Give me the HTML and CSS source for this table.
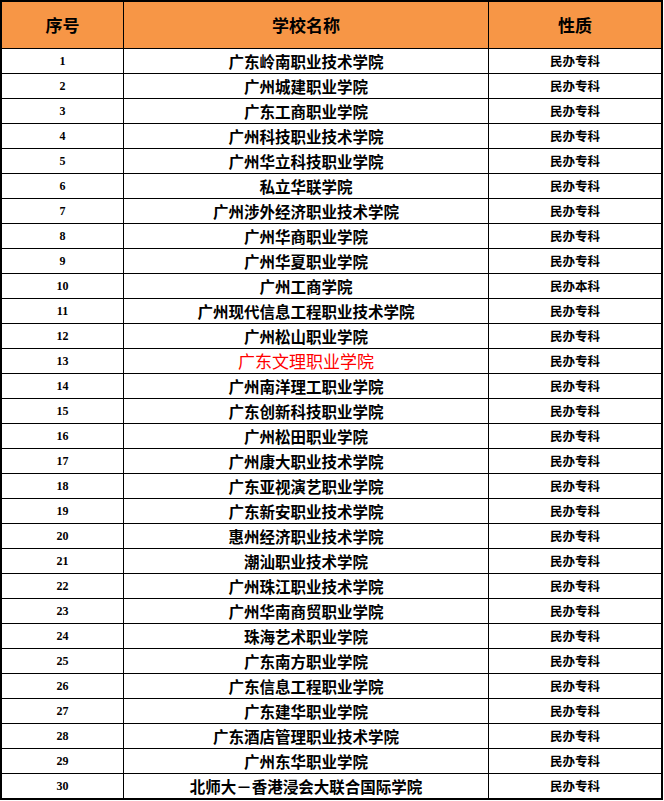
FILE: index.html
```html
<!DOCTYPE html>
<html lang="zh">
<head>
<meta charset="utf-8">
<link rel="stylesheet" href="styles.css">
</head>
<body>
<table class="tbl">
  <colgroup><col class="c1"><col class="c2"><col class="c3"></colgroup>
  <thead>
    <tr><th>序号</th><th>学校名称</th><th>性质</th></tr>
  </thead>
  <tbody>
    <tr><td class="num">1</td><td class="name">广东岭南职业技术学院</td><td class="kind">民办专科</td></tr>
    <tr><td class="num">2</td><td class="name">广州城建职业学院</td><td class="kind">民办专科</td></tr>
    <tr><td class="num">3</td><td class="name">广东工商职业学院</td><td class="kind">民办专科</td></tr>
    <tr><td class="num">4</td><td class="name">广州科技职业技术学院</td><td class="kind">民办专科</td></tr>
    <tr><td class="num">5</td><td class="name">广州华立科技职业学院</td><td class="kind">民办专科</td></tr>
    <tr><td class="num">6</td><td class="name">私立华联学院</td><td class="kind">民办专科</td></tr>
    <tr><td class="num">7</td><td class="name">广州涉外经济职业技术学院</td><td class="kind">民办专科</td></tr>
    <tr><td class="num">8</td><td class="name">广州华商职业学院</td><td class="kind">民办专科</td></tr>
    <tr><td class="num">9</td><td class="name">广州华夏职业学院</td><td class="kind">民办专科</td></tr>
    <tr><td class="num">10</td><td class="name">广州工商学院</td><td class="kind">民办本科</td></tr>
    <tr><td class="num">11</td><td class="name">广州现代信息工程职业技术学院</td><td class="kind">民办专科</td></tr>
    <tr><td class="num">12</td><td class="name">广州松山职业学院</td><td class="kind">民办专科</td></tr>
    <tr><td class="num">13</td><td class="name hl">广东文理职业学院</td><td class="kind">民办专科</td></tr>
    <tr><td class="num">14</td><td class="name">广州南洋理工职业学院</td><td class="kind">民办专科</td></tr>
    <tr><td class="num">15</td><td class="name">广东创新科技职业学院</td><td class="kind">民办专科</td></tr>
    <tr><td class="num">16</td><td class="name">广州松田职业学院</td><td class="kind">民办专科</td></tr>
    <tr><td class="num">17</td><td class="name">广州康大职业技术学院</td><td class="kind">民办专科</td></tr>
    <tr><td class="num">18</td><td class="name">广东亚视演艺职业学院</td><td class="kind">民办专科</td></tr>
    <tr><td class="num">19</td><td class="name">广东新安职业技术学院</td><td class="kind">民办专科</td></tr>
    <tr><td class="num">20</td><td class="name">惠州经济职业技术学院</td><td class="kind">民办专科</td></tr>
    <tr><td class="num">21</td><td class="name">潮汕职业技术学院</td><td class="kind">民办专科</td></tr>
    <tr><td class="num">22</td><td class="name">广州珠江职业技术学院</td><td class="kind">民办专科</td></tr>
    <tr><td class="num">23</td><td class="name">广州华南商贸职业学院</td><td class="kind">民办专科</td></tr>
    <tr><td class="num">24</td><td class="name">珠海艺术职业学院</td><td class="kind">民办专科</td></tr>
    <tr><td class="num">25</td><td class="name">广东南方职业学院</td><td class="kind">民办专科</td></tr>
    <tr><td class="num">26</td><td class="name">广东信息工程职业学院</td><td class="kind">民办专科</td></tr>
    <tr><td class="num">27</td><td class="name">广东建华职业学院</td><td class="kind">民办专科</td></tr>
    <tr><td class="num">28</td><td class="name">广东酒店管理职业技术学院</td><td class="kind">民办专科</td></tr>
    <tr><td class="num">29</td><td class="name">广州东华职业学院</td><td class="kind">民办专科</td></tr>
    <tr><td class="num">30</td><td class="name">北师大－香港浸会大联合国际学院</td><td class="kind">民办专科</td></tr>
  </tbody>
</table>
</body>
</html>
```
FILE: styles.css
```css
html, body {
  margin: 0;
  padding: 0;
  background: #ffffff;
}

.tbl {
  border-collapse: separate;
  border-spacing: 0;
  border: 2px solid #000;
  width: 663px;
  table-layout: fixed;
  font-family: "Noto Sans CJK SC", "Noto Sans", sans-serif;
  color: #000;
}

.c1 { width: 122px; }
.c2 { width: 365px; }
.c3 { width: 172px; }

.tbl th,
.tbl td {
  padding: 0;
  text-align: center;
  vertical-align: middle;
  border-right: 1px solid #000;
  border-bottom: 1px solid #000;
  white-space: nowrap;
  overflow: hidden;
  box-sizing: content-box;
}

.tbl th:last-child,
.tbl td:last-child {
  border-right: none;
}

.tbl tbody tr:last-child td {
  border-bottom: none;
}

.tbl th {
  background: #f79646;
  height: 46px;
  font-size: 17px;
  font-weight: 700;
  line-height: 46px;
}

.tbl td {
  height: 24px;
  line-height: 24px;
}

.num {
  font-family: "Liberation Serif", "DejaVu Serif", serif;
  font-size: 12px;
  font-weight: 700;
}

.name {
  font-size: 15.5px;
  font-weight: 700;
}

.name.hl {
  color: #ff0000;
  font-size: 17px;
  font-weight: 400;
}

.kind {
  font-size: 12.5px;
  font-weight: 700;
}
```
